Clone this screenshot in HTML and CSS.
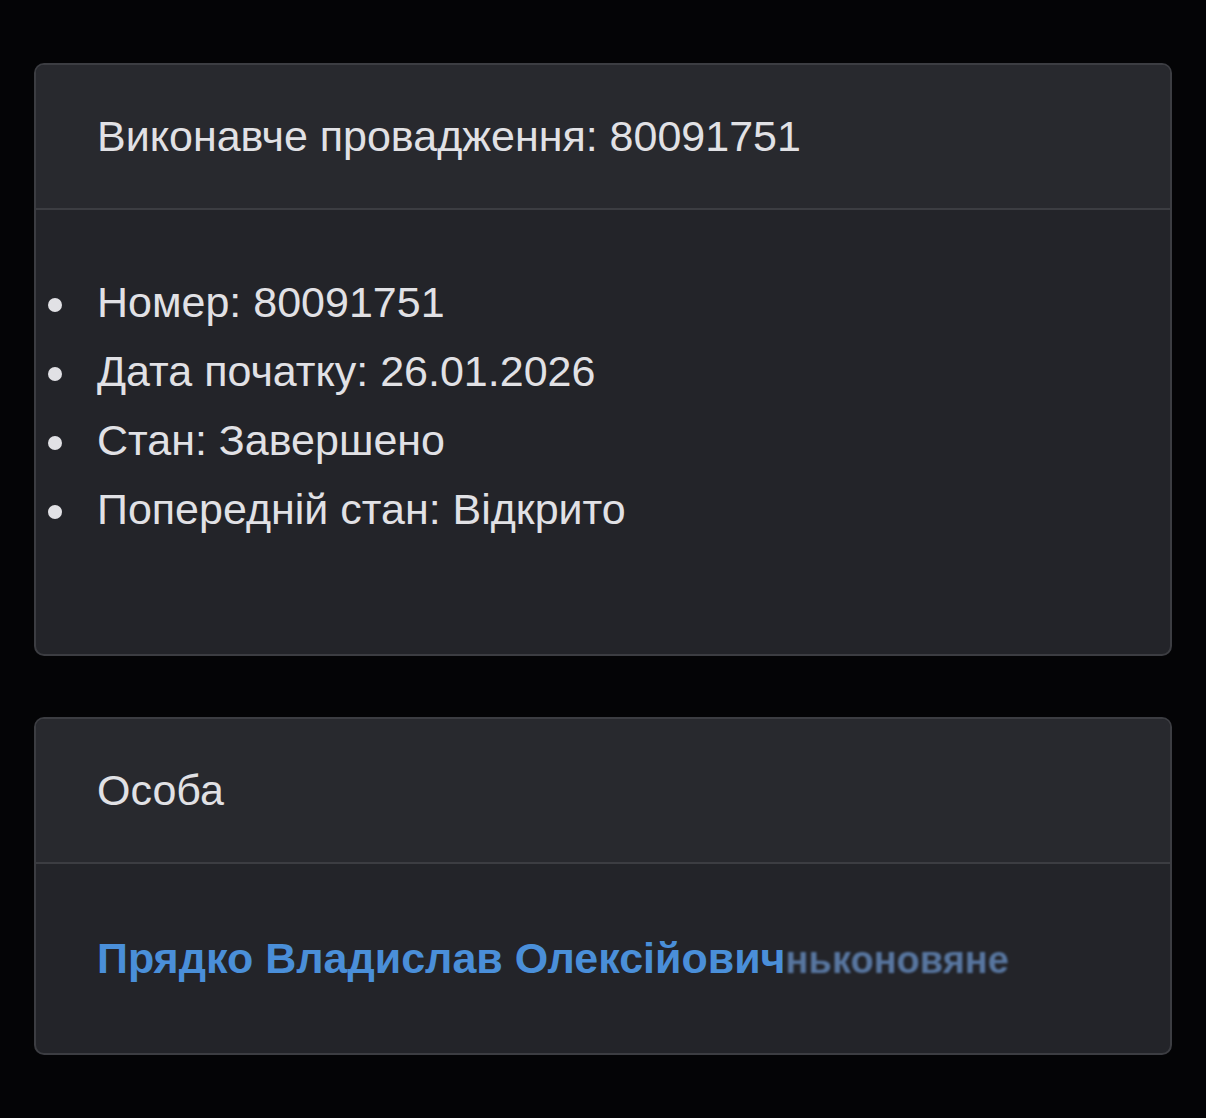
FILE: index.html
```html
<html>
<head>
<title>Виконавче провадження</title>
<meta name="viewport" content="width=device-width, initial-scale=1">
<link rel="stylesheet" href="styles.css">
</head>
<body>

<div class="pagina">

	<div class="cartao">
		<div class="cabecalho">Виконавче провадження: 80091751</div>
		<div class="corpo corpoLista">
			<ul class="lista">
				<li>Номер: 80091751</li>
				<li>Дата початку: 26.01.2026</li>
				<li>Стан: Завершено</li>
				<li>Попередній стан: Відкрито</li>
			</ul>
		</div>
	</div>

	<div class="cartao">
		<div class="cabecalho">Особа</div>
		<div class="corpo corpoOsoba">
			<a class="nome" href="#">Прядко Владислав Олексійович</a><span class="ruido">ньконовяне</span>
		</div>
	</div>

</div>

</body>
</html>
```

FILE: styles.css
```css
	body{
		margin: 0;
		background: #040406;
		font-family: "Liberation Sans", Arial, sans-serif;
		color: #e1e1e5;
	}

	.pagina{
		padding: 63px 34px 62px 34px;
		display: flex;
		flex-direction: column;
		gap: 61px;
	}

	.cartao{
		border: solid 2px #3c3d42;
		border-radius: 10px;
		background: #232429;
		overflow: hidden;
	}

	.cabecalho{
		background: #28292e;
		border-bottom: solid 2px #3c3d42;
		font-size: 43px;
		line-height: 69px;
		padding: 37px 61px 37px 61px;
	}

	.corpo{
		font-size: 43px;
		line-height: 69px;
	}

	.corpoLista{
		padding: 58px 0 110px 0;
	}

	.lista{
		margin: 0;
		padding-left: 61px;
		list-style: none;
	}

	.lista li{
		display: flex;
		align-items: center;
	}

	.lista li::before{
		content: "";
		width: 14px;
		height: 14px;
		border-radius: 50%;
		background: #e1e1e5;
		margin-left: -49px;
		margin-right: 35px;
		margin-top: 4px;
	}

	.corpoOsoba{
		padding: 60px 61px 60px 61px;
		white-space: nowrap;
		height: 69px;
	}

	.nome{
		color: #4a8fd9;
		font-weight: bold;
		text-decoration: none;
	}

	.ruido{
		color: #6a92c8;
		font-weight: bold;
		font-size: 38px;
		line-height: 1;
		letter-spacing: 0px;
		opacity: 0.75;
		filter: blur(0.9px);
	}
```
